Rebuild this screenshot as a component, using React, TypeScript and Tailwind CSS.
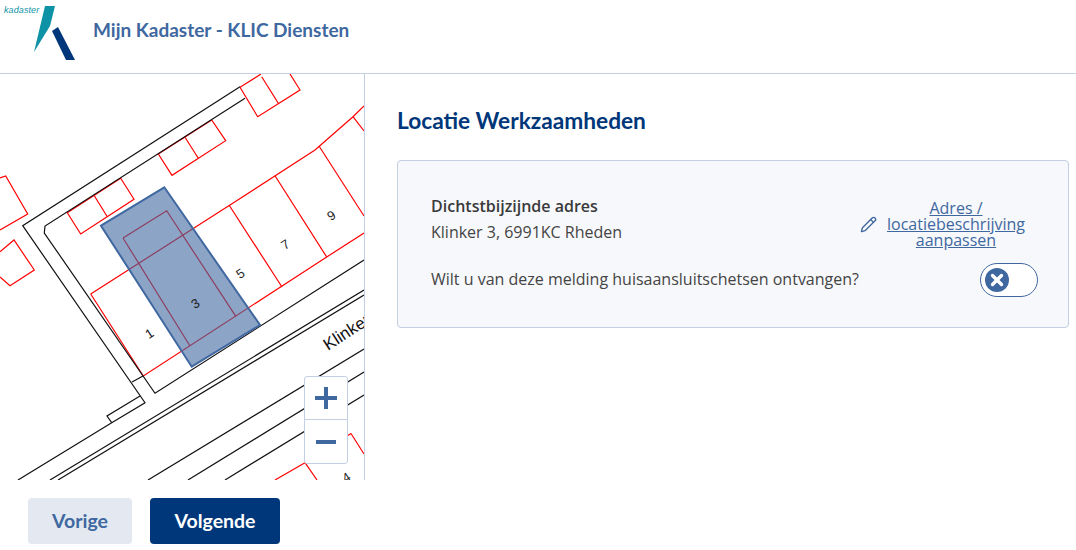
import { Pencil, X } from "lucide-react";

const redPaths = [
  "M90.7 294 L143.3 376 L326.7 257 L364 233",
  "M90.7 294 L230 205 L315 150 L353 116.7 L364 106",
  "M229 205 L282 287",
  "M275 175.7 L326.7 257",
  "M319 146 L364 216",
  "M353 116.7 L364 131",
  "M67.3 212.7 L120.7 178.3 L134 199.3 L80.7 234 Z",
  "M94.3 195.7 L107.3 216.7",
  "M158.3 154 L211.7 120 L225.7 140.7 L172 175.3 Z",
  "M185 137.3 L198.3 158.3",
  "M240 87.3 L261 74 M240 87.3 L257.7 116.7 L300 90 L290 74",
  "M261.7 76.7 L278.3 103.3",
  "M0 178 L5.7 176 L27.7 214 L0 230",
  "M0 251.7 L14 240 L34.3 270 L10 285.7 L0 277",
  "M351 433.5 L364 454 M351 433.5 L347 436",
  "M305 462.7 L275 480 M305 462.7 L317 480",
];

const blackPaths = [
  "M240 86.7 L22.7 225.7 L145 402.7 L111.7 422.7 L18 480",
  "M245 98.3 L45 226 L44.3 233 L155 393.3 L364 260",
  "M140 396 L107 416 L111.7 422.7",
  "M132 382 L143 376",
  "M50 480 L364 290",
  "M58 480 L364 295",
  "M148 480 L364 349",
  "M188 480 L364 372",
  "M225 480 L364 395",
];

const lotNumbers = [
  { label: "1", x: 149, y: 338 },
  { label: "3", x: 195, y: 308 },
  { label: "5", x: 240, y: 278 },
  { label: "7", x: 285, y: 249 },
  { label: "9", x: 331, y: 220 },
  { label: "4", x: 346, y: 482 },
];

function Logo() {
  return (
    <div className="relative h-[73px] w-[93px] shrink-0">
      <span className="absolute left-[4px] top-[4px] font-['Liberation_Sans',sans-serif] text-[9px] italic leading-[12px] tracking-[0.1px] text-[#0e93a6]">
        kadaster
      </span>
      <svg className="absolute left-0 top-0" width="80" height="64" viewBox="0 0 80 64">
        <path d="M45 6 L55 6 L50 26 L34 52 Z" fill="#0e93a6" />
        <path d="M52 31 L58 27 L75 60 L66 60 Z" fill="#00377a" />
      </svg>
    </div>
  );
}

function MapView() {
  return (
    <div className="relative h-[406px] w-[365px] shrink-0 overflow-hidden border-r border-[#c3cfe2]">
      <svg width="364" height="406" viewBox="0 74 364 406" className="block">
        <g fill="none" stroke="#ff0000" strokeWidth="1.2">
          {redPaths.map((d) => (
            <path key={d} d={d} />
          ))}
        </g>
        <g fill="none" stroke="#111111" strokeWidth="1.2">
          {blackPaths.map((d) => (
            <path key={d} d={d} />
          ))}
        </g>
        <path d="M123 238 L166.7 210.7 L236 316.7 M123 238 L190 346" fill="none" stroke="#ff0000" strokeWidth="1.2" />
        <path
          d="M101 225.7 L164.3 187.3 L260 325 L191.7 366.7 Z"
          fill="#4068a0"
          fillOpacity="0.6"
          stroke="#4068a0"
          strokeWidth="2"
        />
        {lotNumbers.map((n) => (
          <text
            key={n.label}
            x={n.x}
            y={n.y}
            textAnchor="middle"
            fontFamily="'Liberation Sans', sans-serif"
            fontSize="13"
            fill="#222222"
            transform={`rotate(-33 ${n.x} ${n.y - 5})`}
          >
            {n.label}
          </text>
        ))}
        <text
          x="328"
          y="351"
          fontFamily="'Liberation Sans', sans-serif"
          fontSize="17"
          fill="#111111"
          transform="rotate(-33 328 351)"
        >
          Klinker
        </text>
      </svg>
      <div className="absolute left-[304px] top-[302px] w-[44px] rounded-[3px] border border-[#c3cfe2] bg-white text-[#4068a0]">
        <div className="flex h-[43px] items-center justify-center border-b border-[#c3cfe2]">
          <svg width="22" height="22" viewBox="0 0 22 22">
            <path d="M0 11 H22 M11 0 V22" stroke="currentColor" strokeWidth="4" />
          </svg>
        </div>
        <div className="flex h-[43px] items-center justify-center">
          <svg width="20" height="4" viewBox="0 0 20 4">
            <path d="M0 2 H20" stroke="currentColor" strokeWidth="4" />
          </svg>
        </div>
      </div>
    </div>
  );
}

function AddressCard() {
  return (
    <div className="flex h-[168px] w-[672px] flex-col rounded-[4px] border border-[#c3cfe2] bg-[#f7f8fb] pl-[33px] pr-[30px] pt-[31px] text-[16px] text-[#444444]">
      <div className="flex items-start justify-between">
        <div className="pt-[1px]">
          <div className="font-semibold leading-[26px] text-[#3a3a3a]">Dichtstbijzijnde adres</div>
          <div className="leading-[26px]">Klinker 3, 6991KC Rheden</div>
        </div>
        <div className="mt-[8px] flex items-center gap-[10px] pr-[13px] text-[#4068a0]">
          <Pencil size={17} strokeWidth={1.9} />
          <a className="w-[138px] text-center leading-[16px] underline">
            Adres / locatiebeschrijving aanpassen
          </a>
        </div>
      </div>
      <div className="mt-[15px] flex items-center justify-between">
        <span className="pb-[2px] leading-[24px]">Wilt u van deze melding huisaansluitschetsen ontvangen?</span>
        <div className="flex h-[34px] w-[58px] items-center rounded-full border border-[#4068a0] bg-white pl-[4px]">
          <span className="flex h-[24px] w-[24px] items-center justify-center rounded-full bg-[#4068a0] text-white">
            <X size={18} strokeWidth={4.5} />
          </span>
        </div>
      </div>
    </div>
  );
}

export default function App() {
  return (
    <div className="h-[550px] w-[1076px] overflow-hidden bg-white font-['Open_Sans',sans-serif]">
      <header className="flex h-[74px] items-start border-b border-[#c3cfe2]">
        <Logo />
        <h1 className="pt-[17px] font-['Lato',sans-serif] text-[19px] font-bold leading-[26px] text-[#4068a0]">
          Mijn Kadaster - KLIC Diensten
        </h1>
      </header>
      <main className="flex">
        <MapView />
        <section className="pl-[32px]">
          <h2 className="pt-[32px] font-['Lato',sans-serif] text-[22.7px] font-bold leading-[30px] text-[#00377a]">
            Locatie Werkzaamheden
          </h2>
          <div className="mt-[24px]">
            <AddressCard />
          </div>
        </section>
      </main>
      <footer className="flex gap-[18px] pl-[28px] pt-[18px] font-['Lato',sans-serif] text-[19.5px] font-bold">
        <button className="h-[46px] w-[104px] rounded-[4px] bg-[#e4e9f1] text-[#4068a0]">Vorige</button>
        <button className="h-[46px] w-[130px] rounded-[4px] bg-[#00377a] text-white">Volgende</button>
      </footer>
    </div>
  );
}
